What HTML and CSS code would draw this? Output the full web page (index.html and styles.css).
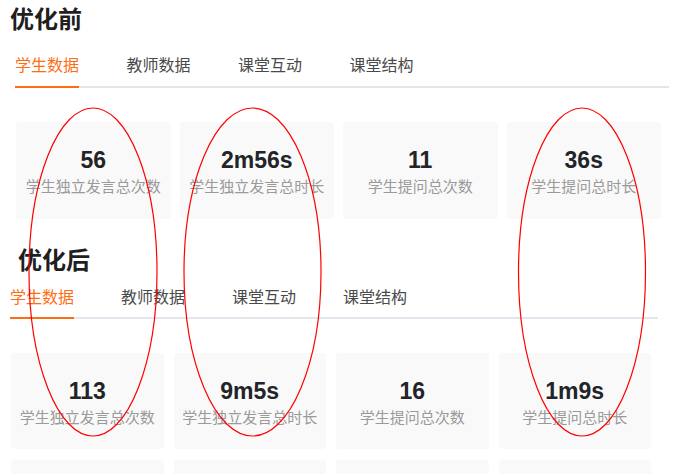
FILE: index.html
```html
<!DOCTYPE html>
<html lang="zh-CN">
<head>
<meta charset="utf-8">
<title>优化前 / 优化后</title>
<link rel="stylesheet" href="styles.css">
</head>
<body>
<div class="page">
  <section class="shot shot-before">
    <h2 class="title">优化前</h2>
    <nav class="tabs">
      <span class="tab active">学生数据</span>
      <span class="tab">教师数据</span>
      <span class="tab">课堂互动</span>
      <span class="tab">课堂结构</span>
    </nav>
    <div class="cards">
      <div class="card"><div class="num">56</div><div class="label">学生独立发言总次数</div></div>
      <div class="card"><div class="num">2m56s</div><div class="label">学生独立发言总时长</div></div>
      <div class="card"><div class="num">11</div><div class="label">学生提问总次数</div></div>
      <div class="card"><div class="num">36s</div><div class="label">学生提问总时长</div></div>
    </div>
  </section>

  <section class="shot shot-after">
    <h2 class="title">优化后</h2>
    <nav class="tabs">
      <span class="tab active">学生数据</span>
      <span class="tab">教师数据</span>
      <span class="tab">课堂互动</span>
      <span class="tab">课堂结构</span>
    </nav>
    <div class="cards">
      <div class="card"><div class="num">113</div><div class="label">学生独立发言总次数</div></div>
      <div class="card"><div class="num">9m5s</div><div class="label">学生独立发言总时长</div></div>
      <div class="card"><div class="num">16</div><div class="label">学生提问总次数</div></div>
      <div class="card"><div class="num">1m9s</div><div class="label">学生提问总时长</div></div>
      <div class="card card-cut"></div>
      <div class="card card-cut"></div>
      <div class="card card-cut"></div>
      <div class="card card-cut"></div>
    </div>
  </section>

  <svg class="marks" width="684" height="474" viewBox="0 0 684 474" aria-hidden="true">
    <ellipse cx="93" cy="272" rx="64" ry="164" />
    <ellipse cx="252.5" cy="272" rx="68.5" ry="164" />
    <ellipse cx="582" cy="272" rx="63.5" ry="164" />
  </svg>
</div>
</body>
</html>
```

FILE: styles.css
```css
html, body {
  margin: 0;
  padding: 0;
  background: #ffffff;
}

body {
  width: 684px;
  height: 474px;
  overflow: hidden;
  font-family: "Noto Sans CJK SC", "Liberation Sans", sans-serif;
}

.page {
  position: relative;
  width: 684px;
  height: 474px;
  overflow: hidden;
}

.shot {
  display: flex;
  flex-direction: column;
}

.title {
  margin: 0;
  font-size: 24px;
  line-height: 32px;
  font-weight: 700;
  color: #1f1f1f;
}

.tabs {
  display: flex;
  border-bottom: 2px solid #e4e6ee;
}

.tab {
  font-size: 16px;
  line-height: 22px;
  color: #4a4a4a;
  border-bottom: 2px solid transparent;
  margin-bottom: -2px;
}

.tab.active {
  color: #ff6d12;
  border-bottom-color: #ff6d12;
}

.cards {
  display: grid;
  grid-template-columns: repeat(4, 1fr);
}

.card {
  background: #f9f9f9;
  border-radius: 4px;
  display: flex;
  flex-direction: column;
  align-items: center;
  padding: 24px 0 23px;
}

.num {
  font-family: "Liberation Sans", Arial, sans-serif;
  font-weight: 700;
  font-size: 23px;
  line-height: 28px;
  color: #222428;
  margin-bottom: 2px;
}

.label {
  font-size: 15px;
  line-height: 20px;
  color: #9a9a9a;
  white-space: nowrap;
}

/* 优化前 */
.shot-before {
  padding-top: 2px;
}

.shot-before .title {
  margin-left: 10px;
}

.shot-before .tabs {
  margin: 19px 15px 0 15px;
  gap: 47.5px;
  width: 654px;
}

.shot-before .tab {
  padding-bottom: 11px;
}

.shot-before .cards {
  margin: 34px 0 0 16px;
  width: 645px;
  column-gap: 9px;
}

/* 优化后 */
.shot-after {
  padding-top: 24px;
}

.shot-after .title {
  margin-left: 18px;
}

.shot-after .tabs {
  margin: 10px 0 0 10px;
  gap: 47px;
  width: 648px;
}

.shot-after .tab {
  padding-bottom: 10px;
}

.shot-after .cards {
  margin: 34px 0 0 11px;
  width: 640px;
  column-gap: 10px;
  row-gap: 11px;
}

.shot-after .card {
  padding-bottom: 22px;
}

/* top edge of the next row, cut off by the screenshot frame */
.shot-after .card-cut {
  height: 14px;
  padding: 0;
  border-radius: 4px 4px 0 0;
}

/* red annotation ellipses drawn over the screenshots */
.marks {
  position: absolute;
  left: 0;
  top: 0;
  pointer-events: none;
}

.marks ellipse {
  fill: none;
  stroke: #ff0000;
  stroke-width: 1.2;
}
```
